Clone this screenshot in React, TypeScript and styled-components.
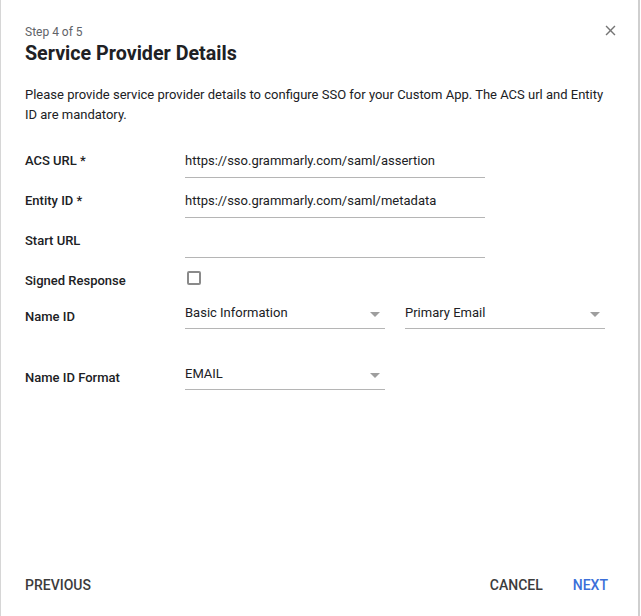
import React from 'react';
import styled, { createGlobalStyle } from 'styled-components';

const GlobalStyle = createGlobalStyle`
  html, body {
    margin: 0;
    padding: 0;
    background: #fff;
  }
  body {
    font-family: Roboto, 'Liberation Sans', Arial, sans-serif;
    color: #202124;
  }
  * {
    box-sizing: border-box;
  }
`;

const Dialog = styled.div`
  width: 640px;
  height: 616px;
  display: flex;
  flex-direction: column;
  background: #fff;
  border-left: 1px solid #d6d6d6;
  border-right: 2px solid #cfcfcf;
  padding: 25px 24px 21px 24px;
`;

const Header = styled.div`
  display: flex;
  justify-content: space-between;
  align-items: flex-start;
`;

const Step = styled.div`
  font-size: 12px;
  line-height: 15px;
  color: #5f6368;
`;

const Title = styled.h1`
  margin: 0;
  font-size: 19.7px;
  line-height: 28px;
  font-weight: 700;
  color: #202124;
`;

const CloseButton = styled.button`
  width: 20px;
  height: 20px;
  margin: -5px -6px 0 0;
  padding: 0;
  border: none;
  background: none;
  display: flex;
  align-items: center;
  justify-content: center;
  cursor: pointer;
  color: #757575;
`;

const Description = styled.p`
  margin: 17px 0 0;
  font-size: 13px;
  line-height: 20px;
  color: #202124;
`;

const Form = styled.div`
  margin-top: 26px;
  display: flex;
  flex-direction: column;
`;

const Row = styled.div<{ $h: number }>`
  display: flex;
  align-items: flex-start;
  height: ${(p) => p.$h}px;
`;

const Label = styled.div<{ $offset?: number }>`
  width: 160px;
  flex: none;
  font-size: 13px;
  line-height: 20px;
  font-weight: 500;
  color: #202124;
  margin-top: ${(p) => p.$offset || 0}px;
`;

const TextField = styled.div`
  width: 300px;
  height: 27px;
  font-size: 13px;
  line-height: 20px;
  color: #202124;
  border-bottom: 1px solid #b5b5b5;
`;

const Controls = styled.div`
  display: flex;
  gap: 20px;
`;

const Select = styled.div`
  width: 200px;
  height: 26px;
  display: flex;
  justify-content: space-between;
  font-size: 13px;
  line-height: 20px;
  color: #202124;
  border-bottom: 1px solid #b5b5b5;
`;

const Arrow = styled.span`
  width: 0;
  height: 0;
  margin: 9px 5px 0 0;
  border-left: 5px solid transparent;
  border-right: 5px solid transparent;
  border-top: 5px solid #9e9e9e;
`;

const Checkbox = styled.span`
  display: block;
  width: 14px;
  height: 14px;
  margin-left: 2px;
  border: 2px solid #8a8a8a;
  border-radius: 2px;
`;

const Footer = styled.div`
  margin-top: auto;
  display: flex;
  align-items: center;
  padding-right: 6px;
`;

const Spacer = styled.div`
  flex: 1;
`;

const Button = styled.button<{ $primary?: boolean }>`
  padding: 0;
  border: none;
  background: none;
  font-family: Roboto, 'Liberation Sans', Arial, sans-serif;
  font-size: 14px;
  line-height: 20px;
  font-weight: 500;
  text-transform: uppercase;
  color: ${(p) => (p.$primary ? '#3b6fd9' : '#3c3c3c')};
  margin-left: ${(p) => (p.$primary ? '30px' : '0')};
  cursor: pointer;
`;

const SelectField = ({ value }: { value: string }) => (
  <Select>
    <span>{value}</span>
    <Arrow />
  </Select>
);

export default function App() {
  return (
    <>
      <GlobalStyle />
      <Dialog>
        <Header>
          <div>
            <Step>Step 4 of 5</Step>
            <Title>Service Provider Details</Title>
          </div>
          <CloseButton aria-label="Close">
            <svg width="17" height="17" viewBox="0 0 24 24" fill="currentColor">
              <path d="M19 6.41L17.59 5 12 10.59 6.41 5 5 6.41 10.59 12 5 17.59 6.41 19 12 13.41 17.59 19 19 17.59 13.41 12z" />
            </svg>
          </CloseButton>
        </Header>
        <Description>
          Please provide service provider details to configure SSO for your Custom App. The ACS url and Entity ID are
          mandatory.
        </Description>
        <Form>
          <Row $h={40}>
            <Label>ACS URL *</Label>
            <TextField>https://sso.grammarly.com/saml/assertion</TextField>
          </Row>
          <Row $h={40}>
            <Label>Entity ID *</Label>
            <TextField>https://sso.grammarly.com/saml/metadata</TextField>
          </Row>
          <Row $h={40}>
            <Label>Start URL</Label>
            <TextField />
          </Row>
          <Row $h={32}>
            <Label>Signed Response</Label>
            <Checkbox />
          </Row>
          <Row $h={61}>
            <Label $offset={4}>Name ID</Label>
            <Controls>
              <SelectField value="Basic Information" />
              <SelectField value="Primary Email" />
            </Controls>
          </Row>
          <Row $h={30}>
            <Label $offset={4}>Name ID Format</Label>
            <SelectField value="EMAIL" />
          </Row>
        </Form>
        <Footer>
          <Button>Previous</Button>
          <Spacer />
          <Button>Cancel</Button>
          <Button $primary>Next</Button>
        </Footer>
      </Dialog>
    </>
  );
}
